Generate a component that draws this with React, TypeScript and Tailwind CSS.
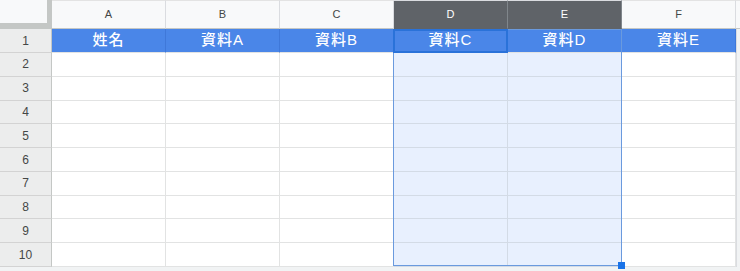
import React from 'react';

const COLUMNS = ['A', 'B', 'C', 'D', 'E', 'F'];
const TITLES = ['姓名', '資料A', '資料B', '資料C', '資料D', '資料E'];
const SELECTED = ['D', 'E'];
const BODY_ROWS = [2, 3, 4, 5, 6, 7, 8, 9, 10];

export default function App() {
  return (
    <div
      className="relative w-[740px] h-[271px] bg-[#f1f3f4] overflow-hidden"
      style={{ fontFamily: '"Liberation Sans", "Noto Sans CJK TC", sans-serif' }}
    >
      {/* column headers */}
      <div className="flex h-[29px]">
        <div className="w-[52px] flex-none bg-[#f8f9fa] border-r-[5px] border-b-[6px] border-[#c4c7c5]" />
        {COLUMNS.map((col) => {
          const sel = SELECTED.includes(col);
          return (
            <div
              key={col}
              className={
                sel
                  ? 'w-[114px] flex-none flex items-center justify-center text-[11px] text-white bg-[#5f6368] border-r border-[#80868b] border-b border-b-[#5f6368] border-t border-t-[#dadce0]'
                  : 'w-[114px] flex-none flex items-center justify-center text-[11px] text-[#444746] bg-[#f8f9fa] border-r border-[#dadce0] border-b border-b-[#c4c7c5] border-t border-t-[#e3e3e3]'
              }
            >
              {col}
            </div>
          );
        })}
        <div className="flex-1 bg-[#f8f9fa] border-t border-[#e3e3e3] border-b border-b-[#c4c7c5]" />
      </div>

      {/* row 1 */}
      <div className="flex h-[24px]">
        <div className="w-[52px] flex-none flex items-center justify-center text-[12px] text-[#444746] bg-[#eceded] border-r border-[#c4c7c5] border-b border-b-[#d3d3d3]">
          1
        </div>
        {TITLES.map((t) => (
          <div
            key={t}
            className="w-[114px] flex-none flex items-center justify-center text-[15px] font-medium tracking-[1px] text-white bg-[#4a86e8] border-r border-[#3f78d9] border-b border-b-[#e2e3e3]"
          >
            {t}
          </div>
        ))}
        <div className="flex-1 bg-[#f1f3f4] border-l border-[#dadce0]" />
      </div>

      {/* rows 2-10 */}
      <div className="flex flex-col h-[214px]">
        {BODY_ROWS.map((r) => (
          <div key={r} className="flex flex-1">
            <div className="w-[52px] flex-none flex items-center justify-center text-[12px] text-[#444746] bg-[#eceded] border-r border-[#c4c7c5] border-b border-b-[#d3d3d3]">
              {r}
            </div>
            {COLUMNS.map((col) => (
              <div
                key={col}
                className={
                  SELECTED.includes(col)
                    ? 'w-[114px] flex-none bg-[#e8f0fe] border-r border-b border-[#d3dbe6]'
                    : 'w-[114px] flex-none bg-white border-r border-b border-[#e2e3e3]'
                }
              />
            ))}
            <div className="flex-1 bg-[#f1f3f4] border-l border-[#dadce0]" />
          </div>
        ))}
      </div>

      {/* selection overlay */}
      <div className="absolute left-[393px] top-[29px] w-[229px] h-[237px] border border-[#6a9ade] pointer-events-none" />
      <div className="absolute left-[393px] top-[29px] w-[115px] h-[24px] border-2 border-[#2a72d9] pointer-events-none" />
      <div className="absolute left-[618px] top-[262px] w-[7px] h-[7px] bg-[#1a73e8]" />
    </div>
  );
}
